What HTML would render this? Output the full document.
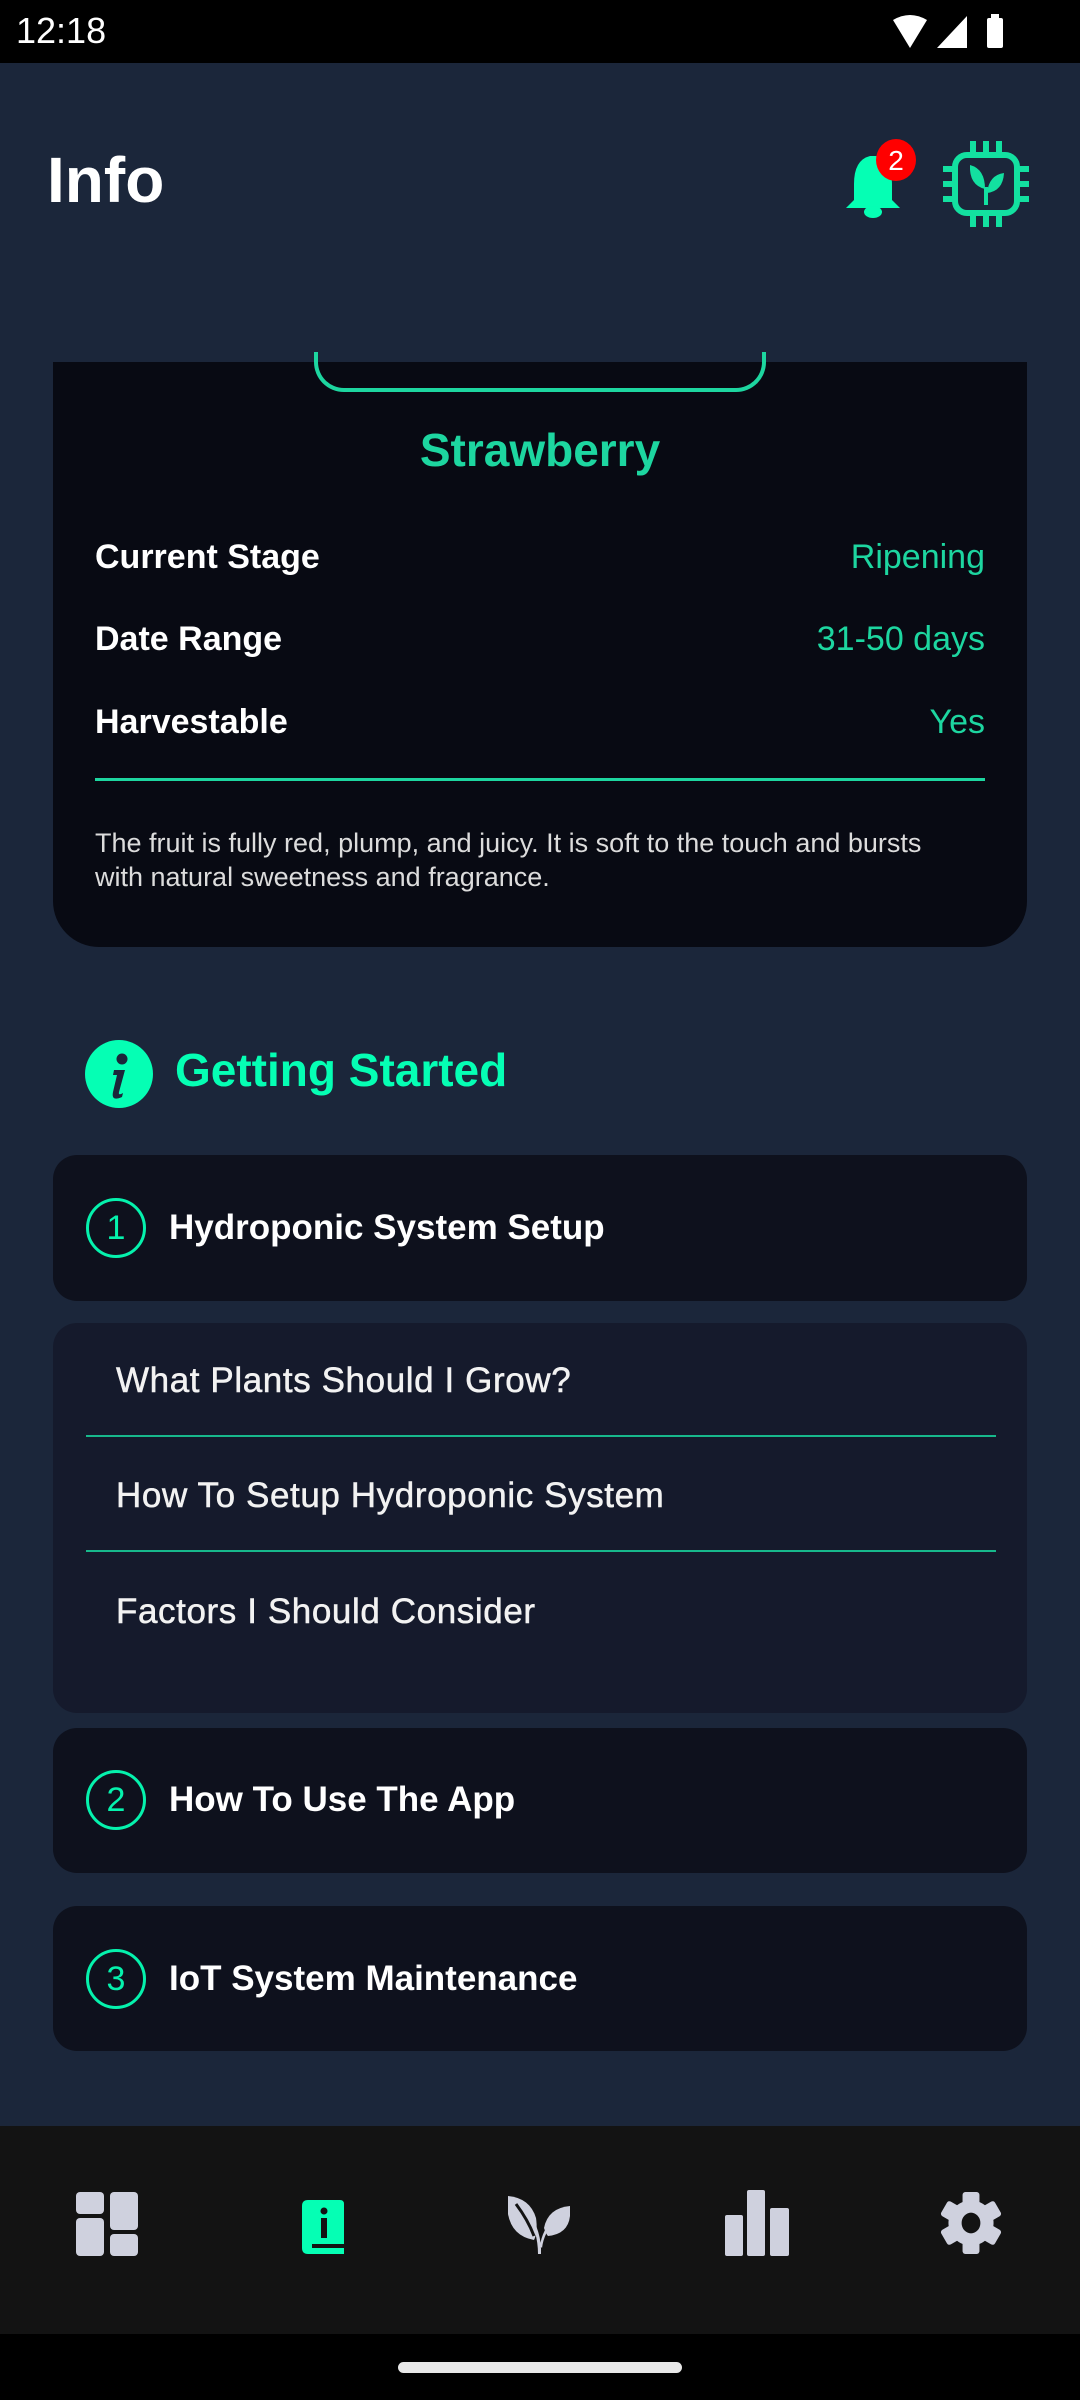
<!DOCTYPE html>
<html><head><meta charset="utf-8">
<style>
*{margin:0;padding:0;box-sizing:border-box}
body{width:1080px;height:2400px;background:#1b263a;font-family:"Liberation Sans",sans-serif;position:relative;overflow:hidden;color:#fff}
.abs{position:absolute}
.status{left:0;top:0;width:1080px;height:63px;background:#000}
.card{left:53px;top:362px;width:974px;height:585px;background:#080a13;border-radius:0 0 46px 46px}
.row{position:absolute;left:42px;right:42px;font-size:34px;font-weight:bold;display:flex;justify-content:space-between;align-items:center;height:40px}
.row span:last-child{color:#1dd6a0;font-weight:normal}
.box{left:53px;width:974px;background:#0e111d;border-radius:24px}
.num{position:absolute;left:33px;width:60px;height:60px;border:3px solid #05f2ad;border-radius:50%;color:#05f2ad;font-size:34px;text-align:center;line-height:54px}
.bt{position:absolute;left:116px;font-size:35px;font-weight:bold}
.item{position:absolute;left:63px;font-size:35px;color:#f2f2f2;letter-spacing:0.6px;-webkit-text-stroke:0.5px #f2f2f2}
.ln{position:absolute;left:33px;width:910px;height:2px;background:#17b88c}
</style></head><body>
<div class="abs status"></div>
<div class="abs" style="left:16px;top:10px;font-size:36px;color:#fff">12:18</div>
<svg class="abs" style="left:885px;top:12px" width="130" height="40" viewBox="0 0 130 40">
<path d="M8 8 Q25 -2 42 8 L25 36 Z" fill="#fff"/>
<path d="M52 36 L82 4 L82 36 Z" fill="#fff"/>
<rect x="102" y="6" width="16" height="30" rx="2" fill="#fff"/><rect x="106" y="2" width="8" height="5" fill="#fff"/>
</svg>

<div class="abs" style="left:47px;top:143px;font-size:64px;font-weight:bold">Info</div>
<svg class="abs" style="left:840px;top:138px" width="80" height="80" viewBox="0 0 80 80">
<path d="M30 18 Q14 22 14 46 L14 62 L6 70 L60 70 L52 62 L52 46 Q52 22 36 18 Z" fill="#05ffb4"/>
<ellipse cx="33" cy="74" rx="9" ry="6" fill="#05ffb4"/>
<ellipse cx="56" cy="22" rx="20" ry="21" fill="#f00"/>
<text x="56" y="32" font-size="28" fill="#fff" text-anchor="middle" font-family="Liberation Sans">2</text>
</svg>
<svg class="abs" style="left:943px;top:141px" width="86" height="86" viewBox="0 0 86 86" fill="none" stroke="#13e0a0" stroke-width="6">
<rect x="12" y="14" width="62" height="58" rx="12"/>
<path d="M30 0V14M43 0V14M56 0V14M30 72V86M43 72V86M56 72V86M0 28H12M0 43H12M0 58H12M74 28H86M74 43H86M74 58H86"/>
<path d="M43 64V46" stroke-width="4"/>
<path d="M42 48 Q26 44 27 24 Q42 28 42 48Z" fill="#13e0a0" stroke="none"/>
<path d="M44 52 Q46 34 61 32 Q60 50 44 52Z" fill="#13e0a0" stroke="none"/>
</svg>

<div class="abs card">
 <div class="abs" style="left:261px;top:-10px;width:452px;height:40px;border:4px solid #1dd6a0;border-top:none;border-radius:0 0 30px 30px"></div>
 <div class="abs" style="left:0;width:974px;top:61px;text-align:center;font-size:46px;font-weight:bold;color:#1dd6a0">Strawberry</div>
 <div class="row" style="top:175px"><span>Current Stage</span><span>Ripening</span></div>
 <div class="row" style="top:257px"><span>Date Range</span><span>31-50 days</span></div>
 <div class="row" style="top:340px"><span>Harvestable</span><span>Yes</span></div>
 <div class="abs" style="left:42px;top:416px;width:890px;height:3px;background:#1dd6a0"></div>
 <div class="abs" style="left:42px;top:464px;width:890px;font-size:27px;line-height:34px;color:#dcdcdc">The fruit is fully red, plump, and juicy. It is soft to the touch and bursts<br>with natural sweetness and fragrance.</div>
</div>

<svg class="abs" style="left:85px;top:1040px" width="68" height="68" viewBox="0 0 68 68">
<circle cx="34" cy="34" r="34" fill="#05ffb4"/>
<circle cx="37" cy="19" r="5.5" fill="#1b263a"/>
<path d="M29 30 L40 30 L34 52 Q33 56 38 53 L37 57 Q26 62 28 52 L32 35 L28 35Z" fill="#1b263a"/>
</svg>
<div class="abs" style="left:175px;top:1043px;font-size:46px;font-weight:bold;color:#05ffb4">Getting Started</div>

<div class="abs box" style="top:1155px;height:146px"><div class="num" style="top:43px">1</div><div class="bt" style="top:53px">Hydroponic System Setup</div></div>
<div class="abs box" style="top:1323px;height:390px;background:#151a2c">
 <div class="item" style="top:38px">What Plants Should I Grow?</div>
 <div class="ln" style="top:112px"></div>
 <div class="item" style="top:153px">How To Setup Hydroponic System</div>
 <div class="ln" style="top:227px"></div>
 <div class="item" style="top:269px">Factors I Should Consider</div>
</div>
<div class="abs box" style="top:1728px;height:145px"><div class="num" style="top:42px">2</div><div class="bt" style="top:52px">How To Use The App</div></div>
<div class="abs box" style="top:1906px;height:145px"><div class="num" style="top:43px">3</div><div class="bt" style="top:53px">IoT System Maintenance</div></div>

<div class="abs" style="left:0;top:2126px;width:1080px;height:208px;background:#131313"></div>
<div class="abs" style="left:0;top:2334px;width:1080px;height:66px;background:#000"></div>
<div class="abs" style="left:398px;top:2362px;width:284px;height:11px;border-radius:6px;background:#e8e8e8"></div>
<svg class="abs" style="left:76px;top:2192px" width="64" height="64" viewBox="0 0 64 64" fill="#cfd1de">
<rect x="0" y="0" width="28" height="22" rx="4"/><rect x="0" y="26" width="28" height="38" rx="4"/><rect x="34" y="0" width="28" height="38" rx="4"/><rect x="34" y="42" width="28" height="22" rx="4"/>
</svg>
<svg class="abs" style="left:302px;top:2200px" width="44" height="56" viewBox="0 0 44 56">
<path d="M6 0H38Q42 0 42 4V44H10V48H42V54H6Q0 54 0 48V6Q0 0 6 0Z" fill="#05ffb4"/>
<rect x="19" y="18" width="6" height="20" fill="#131313"/><circle cx="22" cy="11" r="3.5" fill="#131313"/>
</svg>
<svg class="abs" style="left:508px;top:2196px" width="64" height="60" viewBox="0 0 64 60" fill="#cfd1de">
<path d="M0 0 Q22 2 28 22 Q30 36 26 44 Q4 40 0 18Z"/>
<path d="M62 10 Q40 12 36 32 Q38 38 40 40 Q60 38 62 20Z"/>
<path d="M30 58 Q30 36 18 14 L20 14 Q34 36 33 58Z M32 50 Q34 34 46 22 L48 24 Q36 36 34 52Z" fill="#cfd1de"/>
<path d="M8 8 Q20 24 26 40" stroke="#131313" stroke-width="3" fill="none"/>
</svg>
<svg class="abs" style="left:725px;top:2190px" width="64" height="66" viewBox="0 0 64 66" fill="#cfd1de">
<rect x="0" y="25" width="18" height="41" rx="2"/><rect x="22" y="0" width="18" height="66" rx="2"/><rect x="45" y="18" width="19" height="48" rx="2"/>
</svg>
<svg class="abs" style="left:940px;top:2190px" width="62" height="66" viewBox="-33 -33 66 66">
<g fill="#cfd1de">
<circle r="24"/>
<rect x="-9" y="-33" width="18" height="66" rx="3"/>
<rect x="-9" y="-33" width="18" height="66" rx="3" transform="rotate(60)"/>
<rect x="-9" y="-33" width="18" height="66" rx="3" transform="rotate(-60)"/>
</g>
<ellipse rx="10" ry="11" fill="#131313"/>
</svg>
</body></html>
